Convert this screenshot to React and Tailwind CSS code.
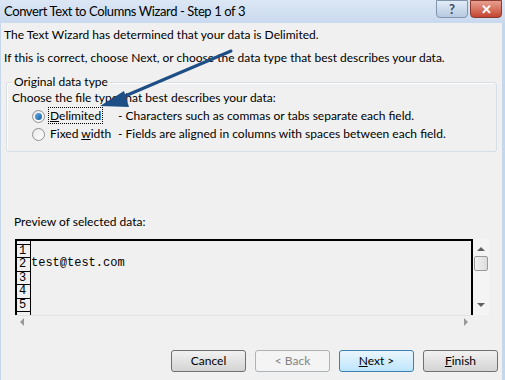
import React from 'react';

const ui = { fontFamily: 'Lato, "Noto Sans", sans-serif' };
const mono = { fontFamily: '"Liberation Mono", monospace' };

function Radio({ checked }) {
  return (
    <span className="relative inline-block w-[13px] h-[13px] rounded-full border border-[#8f8f8f] bg-gradient-to-br from-[#e8e8e8] to-[#ffffff]">
      {checked && (
        <span className="absolute left-[2px] top-[2px] w-[7px] h-[7px] rounded-full bg-gradient-to-br from-[#5fb0f0] to-[#1a5d9c]" />
      )}
    </span>
  );
}

function Button({ children, variant }) {
  const base = 'w-[75px] h-[22px] rounded-[3px] border text-[12px] flex items-center justify-center';
  if (variant === 'default')
    return <button className={`${base} border-[#3c7fb1] bg-gradient-to-b from-[#eaf6fd] to-[#bee6fd] text-black`}>{children}</button>;
  if (variant === 'disabled')
    return <button className={`${base} border-[#adb2b5] bg-[#f4f4f4] text-[#838383]`}>{children}</button>;
  return <button className={`${base} border-[#707070] bg-gradient-to-b from-[#f2f2f2] to-[#d4d4d4] text-black`}>{children}</button>;
}

export default function App() {
  return (
    <div className="w-[505px] h-[380px] flex flex-col bg-[#f0f0f0] overflow-hidden relative text-[12px] text-black" style={ui}>
      {/* Title bar */}
      <div className="h-[23px] flex items-center justify-between bg-gradient-to-b from-[#dce7f5] to-[#c9d9ee] pl-[4px] pr-[3px]">
        <span className="text-[13px] tracking-[-0.4px] text-black leading-none">Convert Text to Columns Wizard - Step 1 of 3</span>
        <div className="flex gap-[2px] self-start">
          <div className="w-[32px] h-[18px] rounded-b-[4px] border border-[#7f94ad] bg-gradient-to-b from-[#e3ecf7] to-[#b6c9e0] flex items-center justify-center text-[13px] font-bold text-[#3c4a5c] leading-none">?</div>
          <div className="w-[32px] h-[18px] rounded-b-[4px] border border-[#8a3a30] bg-gradient-to-b from-[#e8a090] to-[#c2432f] flex items-center justify-center text-white font-bold text-[13px] leading-none">✕</div>
        </div>
      </div>

      <div className="flex-1 flex border-r-[3px] border-r-[#c6d7eb] border-l border-l-[#c6d7eb]">
        <div className="flex-1 flex flex-col">
          <div className="pl-[3px] leading-[23px]">
            <p>The Text Wizard has determined that your data is Delimited.</p>
            <p>If this is correct, choose Next, or choose the data type that best describes your data.</p>
          </div>

          {/* Group box */}
          <div className="relative mx-[5px] mt-[13px] h-[70px] border border-[#d5dfe5] rounded-[3px] shadow-[inset_1px_1px_0_#ffffff]">
            <span className="absolute -top-[9px] left-[5px] px-[2px] bg-[#f0f0f0] leading-[16px]">Original data type</span>
            <div className="pl-[5px] pt-[6px] leading-[18px]">
              <p>Choose the file type that best describes your data:</p>
              <div className="flex items-center pl-[20px]">
                <Radio checked />
                <span className="ml-[4px] w-[69px]">
                  <span className="outline outline-1 outline-dotted outline-black px-[1px]">
                    <span className="underline">D</span>elimited
                  </span>
                </span>
                <span>- Characters such as commas or tabs separate each field.</span>
              </div>
              <div className="flex items-center pl-[20px]">
                <Radio />
                <span className="ml-[5px] w-[68px]">
                  Fixed <span className="underline">w</span>idth
                </span>
                <span>- Fields are aligned in columns with spaces between each field.</span>
              </div>
            </div>
          </div>

          <p className="mt-[62px] pl-[13px] leading-[16px]">Preview of selected data:</p>

          {/* Preview */}
          <div className="mt-[9px] ml-[14px] flex">
            <div className="flex flex-col">
              <div className="w-[458px] h-[76px] border-t-2 border-l-2 border-r-2 border-black bg-[#f0f0f0] flex overflow-hidden" style={mono}>
                <div className="w-[14px] flex flex-col border-r border-black text-[12px] leading-[13px]">
                  {['', '1', '2', '3', '4', '5', ''].map((n, i) => (
                    <div key={i} className={`h-[13.5px] pl-[2px] ${i < 6 ? 'border-b border-black' : ''} ${i === 0 ? 'h-[2px]' : ''}`}>{n}</div>
                  ))}
                </div>
                <div className="flex-1 pt-[16px] text-[12px] leading-[13px]">test@test.com</div>
              </div>
              <div className="h-[12px] flex items-center justify-between px-[5px] bg-[#f0f0f0] border-t border-[#e4e4e4]">
                <span className="w-0 h-0 border-y-[4px] border-y-transparent border-r-[4px] border-r-[#9a9a9a]" />
                <span className="w-0 h-0 border-y-[4px] border-y-transparent border-l-[4px] border-l-[#9a9a9a]" />
              </div>
            </div>
            <div className="w-[16px] h-[76px] flex flex-col items-center bg-[#f4f4f4]">
              <span className="mt-[8px] w-0 h-0 border-x-[4px] border-x-transparent border-b-[4px] border-b-[#606060]" />
              <div className="mt-[5px] w-[14px] h-[15px] rounded-[2px] border border-[#9a9a9a] bg-gradient-to-r from-[#f3f3f3] to-[#dcdcdc]" />
              <span className="mt-auto mb-[8px] w-0 h-0 border-x-[4px] border-x-transparent border-t-[4px] border-t-[#606060]" />
            </div>
          </div>

          {/* Buttons */}
          <div className="mt-[23px] flex justify-end gap-[9px] pr-[4px]">
            <Button>Cancel</Button>
            <Button variant="disabled">&lt; Back</Button>
            <Button variant="default"><span><span className="underline">N</span>ext &gt;</span></Button>
            <Button><span><span className="underline">F</span>inish</span></Button>
          </div>
        </div>
      </div>

      {/* Annotation arrow */}
      <svg className="absolute left-0 top-0 pointer-events-none" width="505" height="380">
        <line x1="231" y1="51" x2="118" y2="99" stroke="#1d4f86" strokeWidth="3" strokeLinecap="round" />
        <polygon points="100,106 124,91 129,107" fill="#1d4f86" />
      </svg>
    </div>
  );
}
